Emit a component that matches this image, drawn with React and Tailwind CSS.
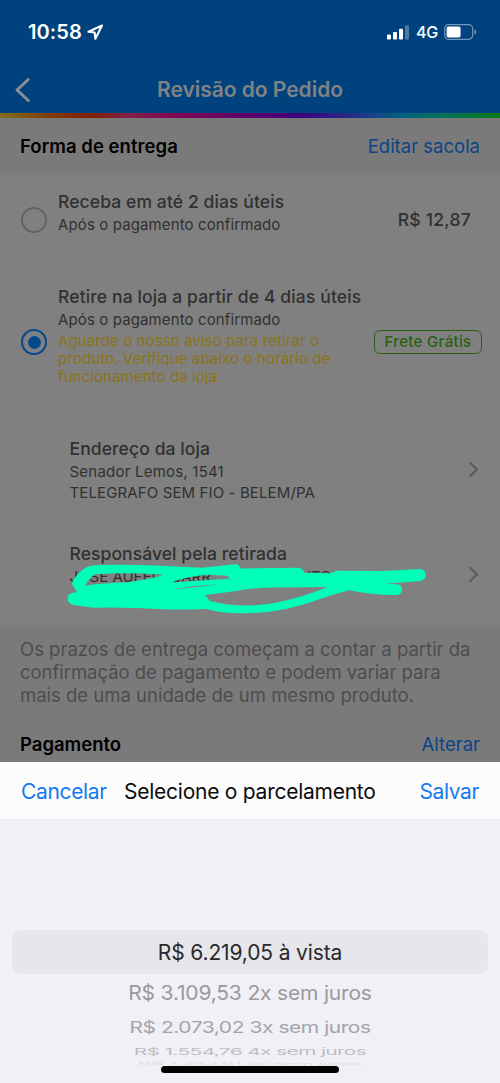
import React from 'react';

function StatusBar() {
  return (
    <div className="flex h-[64px] items-center justify-between pl-[28px] pr-[23px] text-white">
      <div className="flex items-center gap-[5px]">
        <span className="w-[54px] text-[20px] font-semibold leading-6 tracking-[0.1px]">10:58</span>
        <svg width="17" height="16" viewBox="0 0 17 16" fill="none" stroke="currentColor" strokeWidth="2.1" strokeLinejoin="round">
          <path d="M15 1.500 1.400 7.700 7.600 8.500l.8 6.300Z" />
        </svg>
      </div>
      <div className="flex items-center">
        <svg width="22" height="15" viewBox="0 0 22 15" fill="currentColor">
          <rect x="0" y="9.5" width="4" height="5" rx="1" />
          <rect x="6" y="7" width="4" height="7.5" rx="1" />
          <rect x="12" y="3.7" width="4" height="10.8" rx="1" />
          <rect x="18" y="0.3" width="4" height="14.2" rx="1" opacity="0.3" />
        </svg>
        <span className="ml-[7px] text-[16px] font-medium leading-5 tracking-[-0.2px]">4G</span>
        <svg className="ml-[6px]" width="33" height="16" viewBox="0 0 33 16" fill="none">
          <rect x="0.7" y="0.7" width="28" height="14.6" rx="4" stroke="white" strokeOpacity="0.45" strokeWidth="1.2" />
          <rect x="2.6" y="2.6" width="14" height="10.8" rx="2" fill="white" />
          <path d="M30.5 5.4c2 .8 2 4.400 0 5.200Z" fill="white" fillOpacity="0.5" />
        </svg>
      </div>
    </div>
  );
}

function Header() {
  return (
    <header className="h-[113px] bg-[#00427d]">
      <StatusBar />
      <div className="grid h-[49px] grid-cols-[60px_1fr_60px] items-center">
        <svg className="ml-[14px] mt-[3px]" width="18" height="26" viewBox="0 0 18 26" fill="none" stroke="#8a8f94" strokeWidth="3" strokeLinecap="round" strokeLinejoin="round">
          <path d="M14.300 2.500 3 13l11.300 10.500" />
        </svg>
        <h1 className="pt-[2px] text-center text-[21px] font-semibold leading-7 tracking-[-0.03px] text-[#808284]">Revisão do Pedido</h1>
      </div>
    </header>
  );
}

function Radio({ checked }) {
  return checked ? (
    <span className="flex size-[26px] items-center justify-center rounded-full border-[2.500px] border-[#04498c]">
      <span className="size-[13px] rounded-full bg-[#04498c]" />
    </span>
  ) : (
    <span className="block size-[26px] rounded-full border-2 border-[#636363]" />
  );
}

function Chevron() {
  return (
    <svg width="11" height="17" viewBox="0 0 11 17" fill="none" stroke="#5a5a5a" strokeWidth="2">
      <path d="M1.500 1.200 9 8.500l-7.500 7.300" />
    </svg>
  );
}

function Scribble() {
  return (
    <svg className="absolute left-[64px] top-[40px]" width="366" height="54" viewBox="64 562 366 54" fill="#00ffb9" fillRule="evenodd">
      <path
        d="M72 584C72 580 81 570 85 568.300Q90 565 100 565Q125 564.300 150 565.300L202 567.700L235 564.300Q240 564 240 568.500L298 567.700Q303 568 304.300 572.700L330 573.300L337 570.700L383 570.900L419 569Q425.700 569 425.700 575Q425.700 580 420 580.900L385 583.700L397 584.300Q402 585 402 589.600Q402 594.500 397 595Q372 595.200 349 590.300Q333 594.500 317 600Q283 612.500 250 613Q226 614.500 206.700 609Q185 610 163 609.300Q130 607 93 607.700L73 605Q67.700 603 67.700 599.300Q67.700 594 71 593.300L77 592Z
        M85 585.700Q96 583.700 127 582.300Q150 579 162 575.500L161.500 574.500Q125 572 95 574.300Q89 578 85 585.700Z
        M171 582.500Q187 576.500 208 574.800L227 575.800L230 578.700Q202 580.500 171 582.500Z
        M171 589.300Q195 585.500 220 584.300Q198 587.500 171 589.300Z
        M205 595Q222 593 237 590.700Q256 587.400 277 587.500L328 587Q314 592.500 300 596.700Q272 605 250 605.500Q230 606 210 601Z"
      />
    </svg>
  );
}

function DeliveryOptions() {
  return (
    <section className="bg-[#808080] text-[#303030]">
      <div className="ml-[21px] flex h-[93px] border-b border-[#7a7a7a]">
        <div className="w-[37px] pt-[32px]"><Radio /></div>
        <div className="flex-1 pt-[15px]">
          <p className="text-[17.500px] font-medium leading-6 tracking-[0.1px]">Receba em até 2 dias úteis</p>
          <p className="text-[15px] leading-[22px] tracking-[0.12px]">Após o pagamento confirmado</p>
        </div>
        <p className="mr-[29px] mt-[33px] text-[17.500px] font-medium leading-6 tracking-[0.25px]">R$ 12,87</p>
      </div>
      <div className="ml-[21px] flex h-[150px] border-b border-[#7a7a7a]">
        <div className="w-[37px] pt-[61px]"><Radio checked /></div>
        <div className="flex-1 whitespace-nowrap pt-[17px]">
          <p className="text-[17.500px] font-medium leading-6 tracking-[0.13px]">Retire na loja a partir de 4 dias úteis</p>
          <p className="text-[15px] leading-[22px] tracking-[0.12px]">Após o pagamento confirmado</p>
          <p className="mt-px text-[15px] leading-[18.200px] tracking-[0.1px] text-[#8c7318]">
            Aguarde o nosso aviso para retirar o<br />produto. Verifique abaixo o horário de<br />funcionamento da loja.
          </p>
        </div>
        <div className="mr-[18px] mt-[62px] flex h-[24px] w-[108px] items-center justify-center rounded-[6px] border border-[#28600f] pt-px text-[15px] font-medium tracking-[0.32px] text-[#28600f]">Frete Grátis</div>
      </div>
      <div className="ml-[21px] flex h-[104px] justify-between border-b border-[#7a7a7a] pl-[48.500px]">
        <div className="pt-[19px]">
          <p className="text-[17.500px] font-medium leading-6 tracking-[0.1px]">Endereço da loja</p>
          <p className="text-[15px] leading-[21px] tracking-[0.22px]">Senador Lemos, 1541</p>
          <p className="text-[15px] leading-[21px] tracking-[0.12px]">TELEGRAFO SEM FIO - BELEM/PA</p>
        </div>
        <div className="mr-[21px] mt-[43px]"><Chevron /></div>
      </div>
      <div className="relative flex h-[105px] justify-between pl-[69.500px]">
        <div className="pt-[20px]">
          <p className="text-[17.500px] font-medium leading-6 tracking-[0.08px]">Responsável pela retirada</p>
          <p className="flex text-[15px] leading-[21px]">
            <span className="w-[101px]">JOSE AUFEL</span>
            <span className="w-[129px]">CARR</span>
            <span>NTO</span>
          </p>
        </div>
        <div className="mr-[21px] mt-[44px]"><Chevron /></div>
        <Scribble />
      </div>
    </section>
  );
}

function PickerRow({ children, box, text }) {
  return (
    <div className={`flex items-center justify-center whitespace-nowrap ${box}`}>
      <span className={`block ${text}`}>{children}</span>
    </div>
  );
}

function InstallmentSheet() {
  return (
    <section>
      <div className="flex h-[57px] items-center justify-between bg-[#fcfcfd] pl-[21px] pr-[21px] pt-[2px] text-[21px] leading-7 text-[#147aef]">
        <span className="w-[103px] tracking-[-0.35px]">Cancelar</span>
        <span className="flex-1 whitespace-nowrap tracking-[-0.25px] text-[#0b0b0b]">Selecione o parcelamento</span>
        <span className="tracking-[-0.4px]">Salvar</span>
      </div>
      <div className="h-[264px] overflow-hidden bg-[#f1f0f6] pt-[111px]">
        <PickerRow box="mx-[12px] h-[44px] rounded-[9px] bg-[#e7e6eb] pt-px" text="text-[21px] leading-7 tracking-[-0.14px] text-[#29292c]">R$ 6.219,05 à vista</PickerRow>
        <PickerRow box="h-[38px]" text="text-[21px] leading-7 tracking-[-0.18px] scale-y-95 text-[#99999e]">R$ 3.109,53 2x sem juros</PickerRow>
        <PickerRow box="h-[30px] pt-[2px]" text="text-[21px] leading-7 tracking-[-0.46px] scale-y-[0.77] text-[#a3a3a8]">R$ 2.073,02 3x sem juros</PickerRow>
        <PickerRow box="h-[20px]" text="text-[21px] leading-7 tracking-[-0.7px] scale-y-[0.45] text-[#bdbdc2]">R$ 1.554,76 4x sem juros</PickerRow>
        <PickerRow box="h-[4px]" text="text-[21px] leading-7 tracking-[-0.9px] scale-y-[0.16] text-[#dcdce1]">R$ 1.243,81 5x sem juros</PickerRow>
        <div className="relative mx-auto h-[7px] w-[178px] rounded-full bg-black" />
      </div>
    </section>
  );
}

export default function App() {
  return (
    <main className="h-[1083px] w-[500px] overflow-hidden bg-[#7a7a7a] font-['Inter','Liberation_Sans',sans-serif]">
      <Header />
      <div className="h-[5px] bg-[linear-gradient(90deg,#806f1d_0%,#80400a_9%,#802000_18%,#80204a_26%,#800055_36%,#560070_52%,#3b0080_60%,#20398a_73%,#006080_80%,#087060_88%,#0a7a18_100%)]" />
      <div className="flex h-[57px] items-center justify-between px-[20px] pb-[2px] text-[18.500px] leading-6">
        <h2 className="font-semibold tracking-[0.05px] text-black">Forma de entrega</h2>
        <span className="text-[#0a4586]">Editar sacola</span>
      </div>
      <DeliveryOptions />
      <div className="h-[135px] px-[20px] pt-[11px]">
        <p className="whitespace-nowrap text-[18.500px] leading-[23px] text-[#4d4d4f]">
          Os prazos de entrega começam a contar a partir da<br />
          <span className="tracking-[-0.04px]">confirmação de pagamento e podem variar para</span><br />mais de uma unidade de um mesmo produto.
        </p>
        <div className="mt-[25px] flex items-center justify-between text-[18.500px] leading-6">
          <h2 className="font-semibold text-black">Pagamento</h2>
          <span className="text-[#0a4586]">Alterar</span>
        </div>
      </div>
      <InstallmentSheet />
    </main>
  );
}
